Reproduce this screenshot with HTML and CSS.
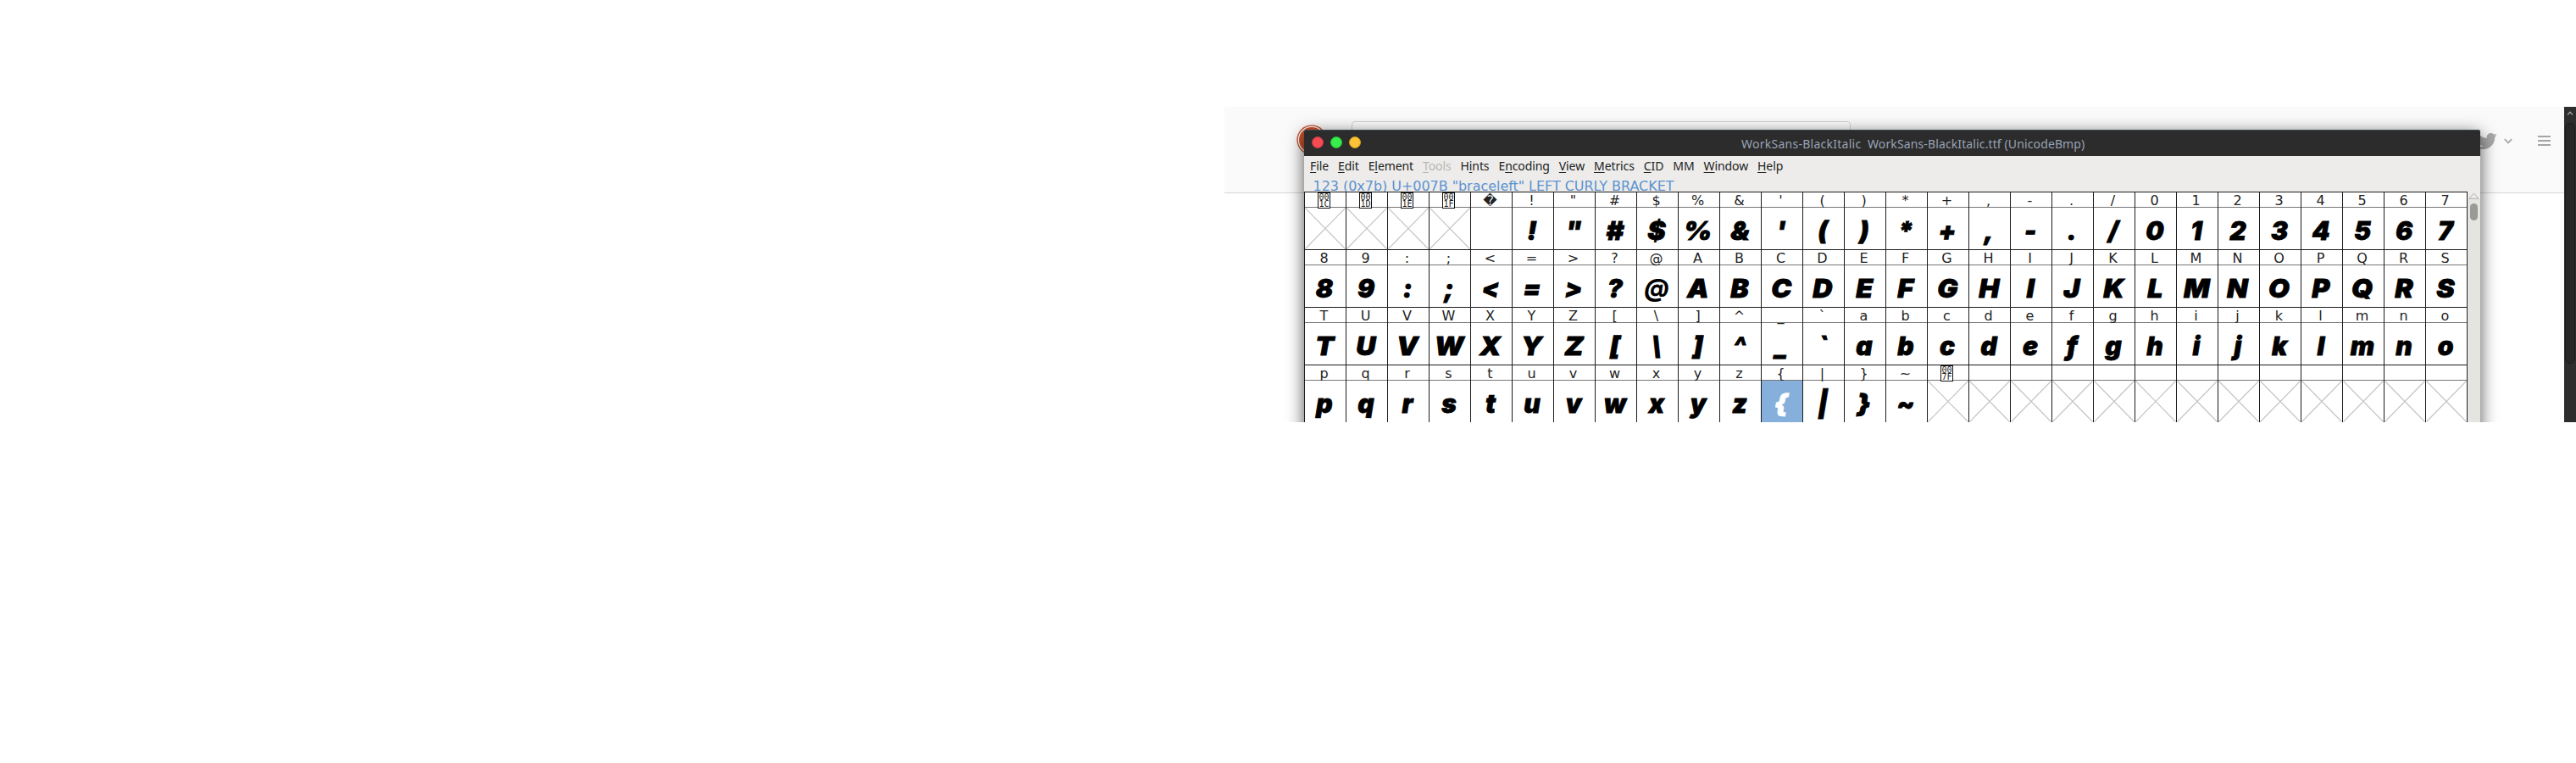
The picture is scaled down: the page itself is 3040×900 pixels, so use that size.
FILE: index.html
```html
<!DOCTYPE html>
<html lang="en">
<head>
<meta charset="utf-8">
<title>WorkSans-BlackItalic</title>
<link rel="stylesheet" href="styles.css">
</head>
<body>
<main class="desktop">
  <header class="site-header">
    <svg class="logo" width="36" height="36" viewBox="0 0 36 36"><circle cx="18" cy="18" r="17.6" fill="#c9512d"/><circle cx="18" cy="18" r="15.6" fill="none" stroke="#fff" stroke-width="1.3"/></svg>
    <div class="search"></div>
    <div class="actions">
      <svg class="bird" width="24" height="20" viewBox="0 0 24 20"><path fill="#a9a9a9" d="M23.6 2.3c-.9.4-1.8.7-2.7.8 1-.6 1.7-1.5 2.1-2.6-.9.5-1.9.9-3 1.1A4.8 4.8 0 0 0 11.8 6C7.8 5.800 4.300 3.900 1.900 1c-1.300 2.200-.6 5 1.500 6.400-.8 0-1.500-.2-2.200-.6 0 2.300 1.600 4.300 3.900 4.800-.7.2-1.400.2-2.200.1.600 1.900 2.400 3.300 4.500 3.300A9.700 9.700 0 0 1 .3 17 13.700 13.700 0 0 0 21.200 4.800c.9-.7 1.800-1.500 2.400-2.500z"/></svg>
      <svg class="chevron" width="10" height="7" viewBox="0 0 10 7"><path d="M.8 1.200 5 5.400 9.200 1.200" fill="none" stroke="#a9a9a9" stroke-width="1.800"/></svg>
      <svg class="burger" width="15" height="12" viewBox="0 0 15 12"><path d="M0 1h15M0 6h15M0 11h15" stroke="#a5a5a5" stroke-width="2"/></svg>
    </div>
  </header>

  <section class="window">
    <div class="titlebar">
      <div class="lights"><i class="red"></i><i class="green"></i><i class="amber"></i></div>
      <div class="title"><span class="t1">WorkSans-BlackItalic</span><span class="t2">WorkSans-BlackItalic.ttf (UnicodeBmp)</span></div>
    </div>
    <nav class="menu">
      <span><u>F</u>ile</span><span><u>E</u>dit</span><span>E<u>l</u>ement</span><span class="off"><u>T</u>ools</span><span>H<u>i</u>nts</span><span>E<u>n</u>coding</span><span><u>V</u>iew</span><span><u>M</u>etrics</span><span><u>C</u>ID</span><span>MM</span><span><u>W</u>indow</span><span><u>H</u>elp</span>
    </nav>
    <div class="info">123 (0x7b) U+007B "braceleft" LEFT CURLY BRACKET</div>
    <div class="view">
      <div class="grid" id="grid"></div>
      <div class="scroll">
        <svg width="13" height="8" viewBox="0 0 13 8"><path d="M.8 7.300 6.500 1l5.700 6.300z" fill="none" stroke="#b0b0ac"/></svg>
        <div class="thumb"></div>
      </div>
    </div>
  </section>

  <aside class="page-scroll">
    <svg width="8" height="5" viewBox="0 0 8 5"><path d="M1 4.400 4 1.200l3 3.200" fill="none" stroke="#aaa" stroke-width="1.300"/></svg>
    <div class="page-thumb"></div>
  </aside>
</main>
<script src="grid.js"></script>
</body>
</html>
```
FILE: styles.css
```css
body { margin: 0; background: #fff; padding: 126px 0 0 1445px; overflow: hidden; }
.desktop { position: relative; width: 1595px; height: 372px; overflow: hidden; background: #fff; }
.site-header { display: flex; align-items: flex-start; height: 101px; background: #fafafa; border-bottom: 1px solid #d6d6d6; }
.logo { margin: 21px 0 0 85px; flex: none; }
.search { flex: none; width: 587px; height: 40px; margin: 17px 0 0 29px; border: 1px solid #d2d2d2; border-radius: 4px; background: #fdfdfd; }
.actions { display: flex; align-items: flex-start; margin-left: auto; padding: 32px 30px 0 0; }
.bird { margin-right: 8px; margin-top: -1px; }
.chevron { margin: 5px 30px 0 0; }
.burger { margin-top: 2px; }

.window { position: absolute; left: 94px; top: 27px; width: 1388px; height: 420px; background: #edecea; border-radius: 2px 2px 0 0; box-shadow: 0 5px 20px rgba(0,0,0,.68); }
.titlebar { height: 31px; box-sizing: border-box; background: #2c2c2c; border-top: 1px solid #37474a; border-radius: 2px 2px 0 0; display: flex; }
.lights { display: flex; gap: 8px; padding: 7px 0 0 9px; }
.lights i { width: 14px; height: 14px; border-radius: 50%; box-sizing: border-box; }
.red { background: #f54b53; border: 1px solid #c93a42; }
.green { background: #38ec4b; border: 1px solid #28bd38; }
.amber { background: #fbc436; border: 1px solid #cf9d24; }
.title { display: flex; margin-left: 449px; font: 14px/20px "Noto Sans", sans-serif; color: #99a3b4; padding-top: 6px; white-space: pre; }
.t1 { width: 149px; letter-spacing: .26px; }
.t2 { letter-spacing: .12px; }
.menu { display: flex; gap: 11px; height: 26px; padding: 2px 0 0 7px; box-sizing: border-box; font: 14px/20px "Noto Sans", sans-serif; color: #222; letter-spacing: -.1px; }
.menu u { text-decoration-thickness: 1px; text-underline-offset: 2px; }
.off { color: #b7b6b4; }
.info { height: 16px; padding-left: 10.5px; font: 16px/20px "DejaVu Sans", sans-serif; letter-spacing: -.04px; color: #5b92cf; white-space: pre; }
.view { display: flex; position: relative; }
.grid { display: grid; grid-template-columns: repeat(28, 49px); grid-auto-rows: 68px; border-right: 1px solid #222; background: #fff; }
.cell { box-sizing: border-box; border-top: 1px solid #1c1c1c; border-left: 1px solid #1c1c1c; display: flex; flex-direction: column; }
.label { height: 17px; border-bottom: 1px solid #777; text-align: center; padding-right: 3px; font: 16px/19px "DejaVu Sans", sans-serif; color: #222; white-space: pre; }
.hex { width: 13px; height: 16px; border: 1px solid #111; margin: 0 auto; background: #fff; font: 10px/8px "DejaVu Sans Mono", monospace; position: relative; z-index: 1; padding-top: 1px; white-space: pre; }
.glyph { height: 49px; display: flex; justify-content: center; font: italic 900 30px/49px Inter, sans-serif; color: #000; }
.glyph span { display: block; white-space: pre; padding: 3px 2px 0 0; -webkit-text-stroke: .8px currentColor; }
.glyph .wide { transform: scaleX(1.07); }
.glyph .at { font-size: 28px; font-weight: 800; -webkit-text-stroke: 0; }
.selected { background: #86afdc; color: #fff; }
.empty { display: block; }
.scroll { width: 15px; height: 300px; background: #e4e5e0; display: flex; flex-direction: column; align-items: center; }
.scroll svg { background: #edecea; padding: 1px 1px 0; }
.thumb { width: 9px; height: 20px; border-radius: 5px; background: #999a95; margin-top: 5px; }

.page-scroll { position: absolute; right: 0; top: 0; width: 14px; height: 372px; background: #2d2d2d; display: flex; flex-direction: column; align-items: center; }
.page-scroll svg { margin-top: 5px; }
.page-thumb { width: 10px; height: 282px; border: 1px solid #1b1b1b; border-radius: 6px; background: #272727; margin-top: 9px; }
```
FILE: grid.js
```js
const grid = document.getElementById('grid');
const cross = '<svg class="empty" width="48" height="49" viewBox="0 0 48 49"><path d="M.5 .5 47.500 48.500M47.500 .5 .5 48.500" stroke="#c4c4c4" stroke-width="1.100" fill="none"/></svg>';
for (let i = 0; i < 112; i++) {
  const code = 0x1c + i;
  const ch = String.fromCharCode(code);
  const cell = document.createElement('div');
  cell.className = 'cell';
  const label = document.createElement('div');
  label.className = 'label';
  const glyph = document.createElement('div');
  glyph.className = 'glyph';
  if (code < 32 || code === 127) {
    const hex = code.toString(16).toUpperCase().padStart(4, '0');
    label.innerHTML = '<div class="hex">' + hex.slice(0, 2) + '\n' + hex.slice(2) + '</div>';
  } else if (code === 32) {
    label.textContent = '\uFFFD';
  } else if (code < 127) {
    label.textContent = ch;
    const s = document.createElement('span');
    s.textContent = ch;
    if (ch === '@') s.className = 'at';
    else if (/[A-Z#$%&\[\]{}]/.test(ch)) s.className = 'wide';
    glyph.append(s);
  }
  if (code < 32 || code > 126) glyph.innerHTML = cross;
  if (code === 123) glyph.classList.add('selected');
  cell.append(label, glyph);
  grid.append(cell);
}
```
